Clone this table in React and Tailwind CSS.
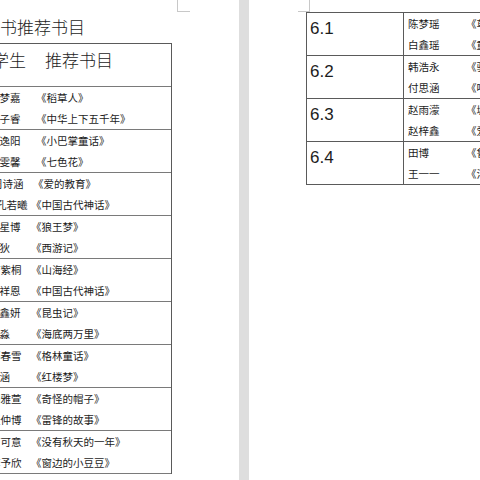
import React from "react";

const leftGroups = [
  { rows: [
    { name: "孙梦嘉", nc: "pl-[9px]", book: "《稻草人》", bc: "pl-[6px]" },
    { name: "李子睿", nc: "pl-[9px]", book: "《中华上下五千年》", bc: "pl-[6px]" },
  ]},
  { rows: [
    { name: "刘逸阳", nc: "pl-[9px]", book: "《小巴掌童话》", bc: "pl-[6px]" },
    { name: "陈雯馨", nc: "pl-[9px]", book: "《七色花》", bc: "pl-[6px]" },
  ]},
  { rows: [
    { name: "周诗涵", nc: "pl-[12px]", book: "《爱的教育》", bc: "pl-[3px]" },
    { name: "孔若曦", nc: "pl-[16px]", book: "《中国古代神话》", bc: "pl-[1px]" },
  ]},
  { rows: [
    { name: "赵星博", nc: "pl-[9px]", book: "《狼王梦》", bc: "pl-[1px]" },
    { name: "张狄", nc: "pl-[9px]", book: "《西游记》", bc: "pl-[1px]" },
  ]},
  { rows: [
    { name: "何紫桐", nc: "pl-[10px]", book: "《山海经》", bc: "pl-[1px]" },
    { name: "吴祥恩", nc: "pl-[9px]", book: "《中国古代神话》", bc: "pl-[1px]" },
  ]},
  { rows: [
    { name: "郭鑫妍", nc: "pl-[9px]", book: "《昆虫记》", bc: "pl-[1px]" },
    { name: "林淼", nc: "pl-[9px]", book: "《海底两万里》", bc: "pl-[1px]" },
  ]},
  { rows: [
    { name: "邱春雪", nc: "pl-[10px]", book: "《格林童话》", bc: "pl-[1px]" },
    { name: "马涵", nc: "pl-[9px]", book: "《红楼梦》", bc: "pl-[1px]" },
  ]},
  { rows: [
    { name: "刘雅萱", nc: "pl-[10px]", book: "《奇怪的帽子》", bc: "pl-[1px]" },
    { name: "张仲博", nc: "pl-[10px]", book: "《雷锋的故事》", bc: "pl-[1px]" },
  ]},
  { rows: [
    { name: "丁可意", nc: "pl-[10px]", book: "《没有秋天的一年》", bc: "pl-[1px]" },
    { name: "李予欣", nc: "pl-[10px]", book: "《窗边的小豆豆》", bc: "pl-[1px]" },
  ]},
];

const rightGroups = [
  { cls: "6.1", rows: [["陈梦瑶", "《草房子》"], ["白鑫瑶", "《童年》"]] },
  { cls: "6.2", rows: [["韩浩永", "《骆驼祥子》"], ["付思涵", "《呼兰河传》"]] },
  { cls: "6.3", rows: [["赵雨濛", "《城南旧事》"], ["赵梓鑫", "《爱的教育》"]] },
  { cls: "6.4", rows: [["田博", "《鲁滨逊漂流记》"], ["王一一", "《汤姆索亚历险记》"]] },
];

export default function App() {
  return (
    <div className="w-[480px] h-[480px] overflow-hidden flex bg-white text-[#1c1c1c] font-['Noto_Sans_CJK_SC',sans-serif]">
      {/* left page */}
      <div className="relative w-[239px] h-full overflow-hidden bg-white shrink-0">
        <div className="absolute left-[177px] top-0 h-[12px] w-[13px] border-l border-b border-[#c8c8c8]" />
        <div className="h-[43px] pt-[17px] -ml-[17px] text-[17px] leading-[20px] font-light whitespace-nowrap">
          读书推荐书目
        </div>
        <div className="-ml-[20px] w-[192px] border-t border-r border-[#5a5a5a]">
          <div className="h-[43px] border-b border-[#7a7a7a] flex items-start pt-[6px] text-[17px] leading-[20px] font-light whitespace-nowrap">
            <span className="w-[65px] pl-[12px]">学生</span>
            <span>推荐书目</span>
          </div>
          {leftGroups.map((g, i) => (
            <div key={i} className="h-[43px] border-b border-[#7a7a7a] text-[10.5px] leading-[21px] whitespace-nowrap">
              {g.rows.map((r, j) => (
                <div key={j} className="flex h-[21px]">
                  <span className={"w-[50px] shrink-0 " + r.nc}>{r.name}</span>
                  <span className={r.bc}>{r.book}</span>
                </div>
              ))}
            </div>
          ))}
        </div>
      </div>

      {/* gutter */}
      <div className="w-[10px] h-full bg-[#dedede] shrink-0" />

      {/* right page */}
      <div className="relative flex-1 h-full overflow-hidden bg-white">
        <div className="absolute left-[49px] top-0 w-[12px] h-[12px] border-r border-b border-[#c8c8c8]" />
        <div className="pt-[12px] pl-[57px]">
          <div className="w-[300px] border-t border-l border-[#5a5a5a]">
            {rightGroups.map((g, i) => (
              <div key={i} className="flex h-[43px] border-b border-[#5a5a5a]">
                <div className="w-[97px] shrink-0 border-r border-[#5a5a5a] pl-[3px] pt-[6px] text-[17px] leading-[20px] font-['Liberation_Sans',sans-serif]">
                  {g.cls}
                </div>
                <div className="flex-1 text-[10.5px] leading-[21px] whitespace-nowrap">
                  {g.rows.map((r, j) => (
                    <div key={j} className="flex h-[21px]">
                      <span className="w-[60px] shrink-0 pl-[4px]">{r[0]}</span>
                      <span className="pl-[2px]">{r[1]}</span>
                    </div>
                  ))}
                </div>
              </div>
            ))}
          </div>
        </div>
      </div>
    </div>
  );
}
